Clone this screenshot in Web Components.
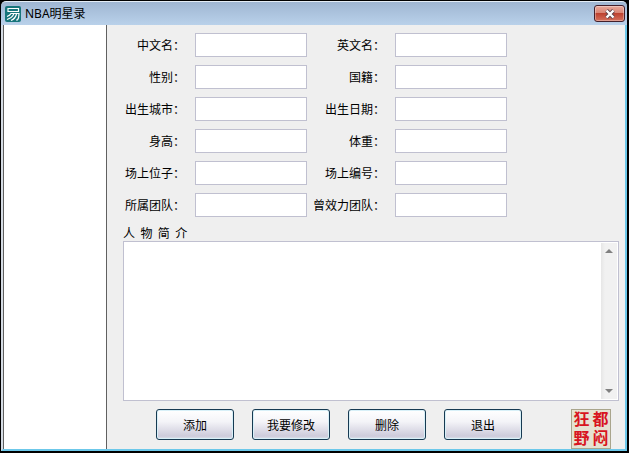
<!DOCTYPE html>
<html lang="zh-CN">

<head>
    <meta charset="UTF-8">
    <meta name="viewport" content="width=device-width, initial-scale=1.0">
    <title>NBA明星录</title>
    <style>
        html,
        body {
            height: 100%;
            margin: 0;
        }

        body {
            background: #000;
            color: #000;
            font: 12px/16px "Noto Sans CJK SC", sans-serif;
        }
    </style>
</head>

<body>
    <app-window caption="NBA明星录">
        <player-list slot="side"></player-list>
        <player-form>
            <text-field label="中文名："></text-field>
            <text-field label="英文名："></text-field>
            <text-field label="性别："></text-field>
            <text-field label="国籍："></text-field>
            <text-field label="出生城市："></text-field>
            <text-field label="出生日期："></text-field>
            <text-field label="身高："></text-field>
            <text-field label="体重："></text-field>
            <text-field label="场上位子："></text-field>
            <text-field label="场上编号："></text-field>
            <text-field label="所属团队："></text-field>
            <text-field label="曾效力团队："></text-field>
            <bio-field slot="bio" label="人  物  简  介"></bio-field>
            <push-button slot="actions">添加</push-button>
            <push-button slot="actions">我要修改</push-button>
            <push-button slot="actions">删除</push-button>
            <push-button slot="actions">退出</push-button>
            <seal-stamp slot="seal"></seal-stamp>
        </player-form>
    </app-window>

    <script>
        class BaseElement extends HTMLElement {
            constructor() {
                super();
                this.attachShadow({ mode: "open" });
            }

            connectedCallback() {
                this.shadowRoot.innerHTML = `<style>* { box-sizing: border-box; }</style>${this.render()}`;
            }
        }

        class AppWindow extends BaseElement {
            render() {
                return `
                    <style>
                        :host {
                            display: flex;
                            flex-direction: column;
                            box-sizing: border-box;
                            min-height: 100%;
                            border: solid #000;
                            border-width: 1px 2px 2px 1px;
                            background: #000;
                        }
                        header {
                            display: flex;
                            align-items: center;
                            gap: 4px;
                            height: 24px;
                            padding: 0 2px 0 4px;
                            border-top: 1px solid #e4edf6;
                            border-radius: 5px 5px 0 0;
                            background: linear-gradient(#9fb6d2, #b9d1ea);
                        }
                        h1 {
                            flex: 1;
                            margin: 0;
                            font: 12px/16px "Noto Sans", "Noto Sans CJK SC", sans-serif;
                        }
                        .close {
                            display: grid;
                            place-items: center;
                            width: 31px;
                            height: 17px;
                            padding: 0;
                            border: 1px solid #43202b;
                            border-radius: 3px;
                            background: linear-gradient(#e9a99b, #d98575 45%, #bd4230 50%, #d5705c);
                            box-shadow: inset 0 0 0 1px #ffffff55;
                        }
                        main {
                            flex: 1;
                            display: flex;
                            border: solid #6cc8ea;
                            border-width: 0 2px 2px;
                            border-left-color: #d5dce4;
                            background: #efefef;
                        }
                        ::slotted(player-form) {
                            flex: 1;
                        }
                    </style>
                    <header>
                        <svg width="16" height="16" viewBox="0 0 16 16" fill="none" stroke="#fff" stroke-width="1.2">
                            <rect width="16" height="16" rx="2" fill="#17757b" stroke="none"/>
                            <path d="M3 2.5H13.5V5.5H3ZM2 10.5Q5 9.5 6 7.5H14Q14 12 12.5 14H11M2 13.5Q7 12 8.8 8M6 14.5Q10.5 12.5 11.5 8"/>
                        </svg>
                        <h1>${this.getAttribute("caption")}</h1>
                        <button class="close" type="button" aria-label="关闭">
                            <svg width="12" height="10" viewBox="0 0 12 10" fill="none">
                                <path d="M2.5 1.5L9.5 8.5M9.5 1.5L2.5 8.5" stroke="#5d4249" stroke-width="4"/>
                                <path d="M2.5 1.5L9.5 8.5M9.5 1.5L2.5 8.5" stroke="#fff" stroke-width="2.4"/>
                            </svg>
                        </button>
                    </header>
                    <main>
                        <slot name="side"></slot>
                        <slot></slot>
                    </main>
                `;
            }
        }

        class PlayerList extends BaseElement {
            render() {
                return `
                    <style>
                        :host {
                            display: block;
                            box-sizing: border-box;
                            flex: none;
                            width: 104px;
                            border: solid #606060;
                            border-width: 0 1px;
                            background: #fff;
                        }
                    </style>
                `;
            }
        }

        class PlayerForm extends BaseElement {
            render() {
                return `
                    <style>
                        :host {
                            display: flex;
                            flex-direction: column;
                            box-sizing: border-box;
                            padding: 8px 6px 0 8px;
                        }
                        .fields {
                            display: grid;
                            grid-template-columns: 192px 192px;
                            gap: 8px;
                        }
                        .bio {
                            flex: 1;
                            display: flex;
                            margin: 8px 0 8px 8px;
                        }
                        ::slotted(bio-field) {
                            flex: 1;
                        }
                        footer {
                            display: flex;
                            align-items: flex-start;
                            gap: 18px;
                            padding: 0 8px 0 41px;
                        }
                        ::slotted(seal-stamp) {
                            margin-left: auto;
                        }
                    </style>
                    <div class="fields"><slot></slot></div>
                    <div class="bio"><slot name="bio"></slot></div>
                    <footer>
                        <slot name="actions"></slot>
                        <slot name="seal"></slot>
                    </footer>
                `;
            }
        }

        class TextField extends BaseElement {
            render() {
                return `
                    <style>
                        :host {
                            display: flex;
                            align-items: center;
                            justify-content: flex-end;
                            gap: 10px;
                        }
                        label {
                            white-space: nowrap;
                        }
                        input {
                            width: 112px;
                            height: 24px;
                            padding: 2px 4px;
                            border: 1px solid #c0c0d0;
                            background: #fff;
                            font: inherit;
                        }
                    </style>
                    <label for="value">${this.getAttribute("label")}</label>
                    <input id="value" type="text">
                `;
            }
        }

        class BioField extends BaseElement {
            render() {
                return `
                    <style>
                        :host {
                            display: flex;
                            flex-direction: column;
                        }
                        label {
                            white-space: pre;
                        }
                        .box {
                            flex: 1;
                            display: flex;
                            min-height: 80px;
                            border: 1px solid #c0c0d0;
                            background: #fff;
                        }
                        textarea {
                            flex: 1;
                            padding: 4px;
                            border: 0;
                            background: none;
                            font: inherit;
                            resize: none;
                            overflow: hidden;
                        }
                        .bar {
                            display: flex;
                            flex-direction: column;
                            justify-content: space-between;
                            width: 16px;
                            margin: 1px;
                            background: linear-gradient(90deg, #e6e6e6, #f1f1f1 4px);
                        }
                        .bar button {
                            display: grid;
                            place-items: center;
                            height: 16px;
                            padding: 0;
                            border: 0;
                            background: none;
                        }
                    </style>
                    <label for="bio">${this.getAttribute("label")}</label>
                    <div class="box">
                        <textarea id="bio"></textarea>
                        <div class="bar">
                            <button type="button" aria-label="向上">
                                <svg width="8" height="4"><path d="M0 4L4 0L8 4Z" fill="#808080"/></svg>
                            </button>
                            <button type="button" aria-label="向下">
                                <svg width="8" height="4"><path d="M0 0L4 4L8 0Z" fill="#808080"/></svg>
                            </button>
                        </div>
                    </div>
                `;
            }
        }

        class PushButton extends BaseElement {
            render() {
                return `
                    <style>
                        :host {
                            display: block;
                        }
                        button {
                            display: block;
                            width: 78px;
                            height: 31px;
                            padding: 0;
                            border: 1px solid #173a52;
                            border-radius: 3px;
                            background: linear-gradient(#fff, #f4f4f8 40%, #cdcbdb 90%, #dfe3ec);
                            box-shadow: inset 0 0 0 1px #d8f0f8;
                            color: #000;
                            font: inherit;
                        }
                    </style>
                    <button type="button"><slot></slot></button>
                `;
            }
        }

        class SealStamp extends BaseElement {
            render() {
                return `
                    <style>
                        :host {
                            display: grid;
                            grid-template-columns: 1fr 1fr;
                            place-items: center;
                            box-sizing: border-box;
                            width: 40px;
                            height: 40px;
                            border: 1px solid #a9a58c;
                            background: #e6e2d2;
                            color: #d81420;
                            font: bold 16px/18px "Liberation Sans", "Noto Sans CJK SC", sans-serif;
                        }
                        span {
                            height: 18px;
                        }
                    </style>
                    <span>狂</span><span>都</span><span>野</span><span>闷</span>
                `;
            }
        }

        customElements.define("app-window", AppWindow);
        customElements.define("player-list", PlayerList);
        customElements.define("player-form", PlayerForm);
        customElements.define("text-field", TextField);
        customElements.define("bio-field", BioField);
        customElements.define("push-button", PushButton);
        customElements.define("seal-stamp", SealStamp);
    </script>
</body>

</html>
